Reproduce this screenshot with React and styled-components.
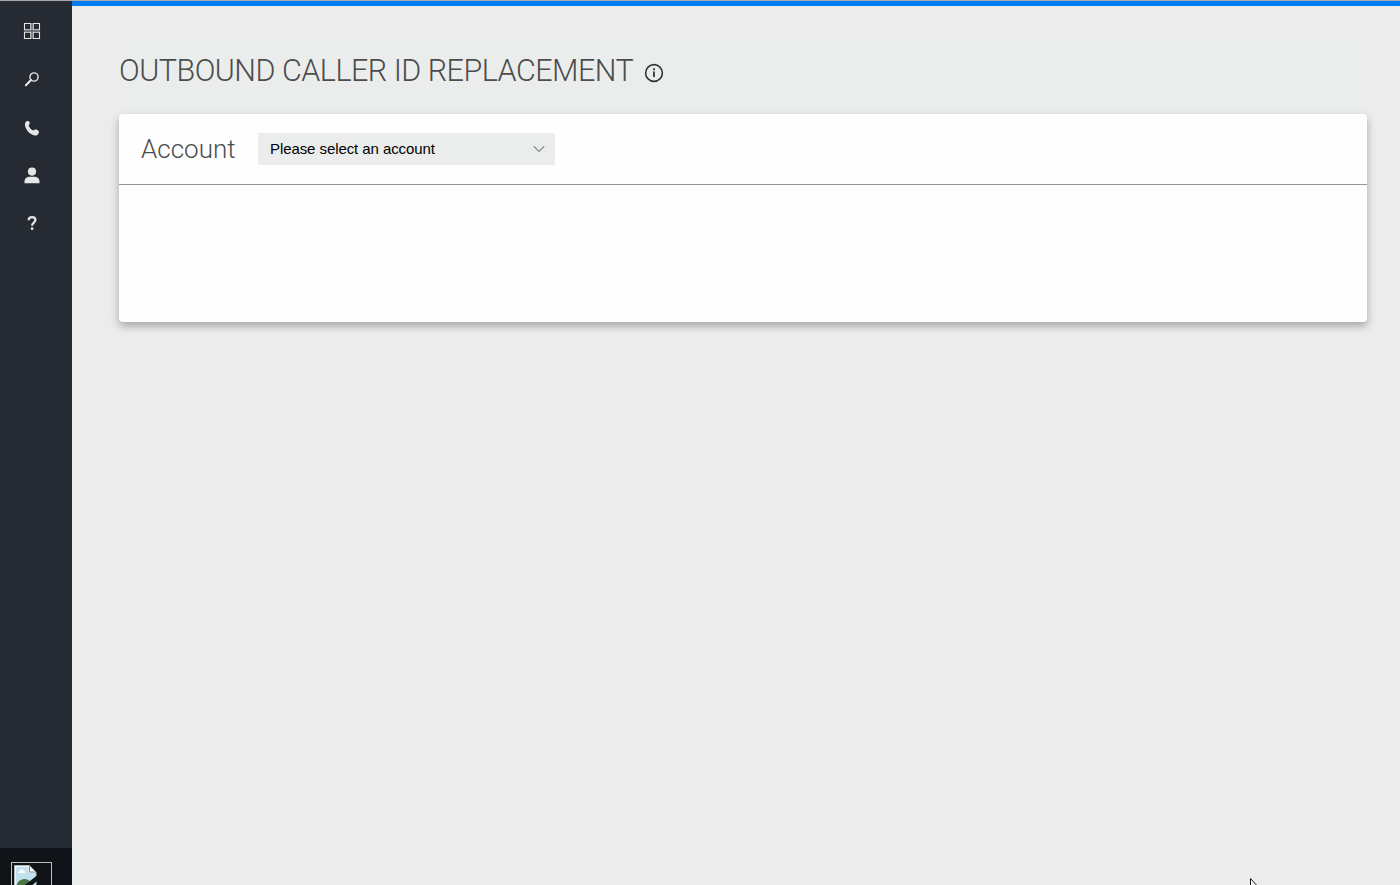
import React from "react";
import styled, { createGlobalStyle } from "styled-components";

const GlobalStyle = createGlobalStyle`
  *, *::before, *::after { box-sizing: border-box; }
  html, body { margin: 0; padding: 0; height: 100%; overflow: hidden; background: #ececec; }
`;

const Shell = styled.div`
  display: flex;
  height: 885px;
  border-top: 1px solid #a7a9aa;
  overflow: hidden;
  font-family: Roboto, sans-serif;
`;

const Sidebar = styled.aside`
  display: flex;
  flex-direction: column;
  flex: 0 0 72px;
  background: #252a33;
`;

const Nav = styled.nav`
  display: flex;
  flex-direction: column;
  flex: 1;
  padding-top: 6px;
`;

const NavButton = styled.button`
  display: flex;
  align-items: center;
  justify-content: center;
  width: 64px;
  height: 48px;
  padding: 0;
  border: 0;
  background: none;
  color: #e6e6e6;
`;

const Profile = styled.div`
  flex: 0 0 37px;
  padding: 14px 0 0 11px;
  background: #101418;
  overflow: hidden;
`;

const Avatar = styled.div`
  width: 41px;
  height: 41px;
  padding: 2px;
  border: 1px solid #c0c0c0;
`;

const Main = styled.main`
  flex: 1;
  border-top: 5px solid #007df0;
  padding: 0 33px 0 47px;
  background: #ececec;
`;

const PageHeader = styled.header`
  display: flex;
  align-items: center;
  height: 108px;
  padding-top: 21px;
  background: linear-gradient(#ececec 28px, #ebedec 28px);
`;

const Title = styled.h1`
  margin: 0;
  width: 516px;
  font-size: 30.5px;
  line-height: 36px;
  font-weight: 300;
  letter-spacing: -0.5px;
  white-space: nowrap;
  color: #4b4d4d;
`;

const InfoButton = styled.button`
  display: flex;
  margin: 4px 0 0 9px;
  padding: 0;
  border: 0;
  background: none;
  color: #333639;
`;

const Card = styled.section`
  height: 208px;
  border-radius: 4px;
  background: #fefefe;
  box-shadow: 0 4px 9px rgba(0, 0, 0, 0.3);
`;

const CardHeader = styled.div`
  display: flex;
  align-items: center;
  height: 71px;
  padding-left: 22px;
  border-bottom: 1px solid #949494;
`;

const Label = styled.span`
  width: 117px;
  font-size: 26px;
  line-height: 32px;
  font-weight: 300;
  color: #4b4d4d;
`;

const Select = styled.button`
  display: flex;
  align-items: center;
  justify-content: space-between;
  width: 297px;
  height: 32px;
  padding: 0 10px 0 12px;
  border: 0;
  background: #ebedec;
  color: #000;
  font: 15px "Liberation Sans", Arial, sans-serif;
  letter-spacing: -0.08px;
`;

const SelectValue = styled.span`
  padding-bottom: 2px;
`;

const Pointer = styled.svg`
  position: absolute;
  left: 1250px;
  top: 878px;
`;

const GridIcon = () => (
  <svg width="18" height="18" viewBox="0 0 18 18" fill="none" stroke="currentColor" strokeWidth="1.1">
    <path d="M9 1v16M1 9h16" opacity=".4" />
    <path d="M1.500 1.500h6.300v6.300H1.500zM10.200 1.500h6.300v6.300h-6.300zM1.500 10.200h6.300v6.300H1.500zM10.200 10.200h6.300v6.300h-6.300z" />
  </svg>
);

const SearchIcon = () => (
  <svg width="18" height="18" viewBox="0 0 18 18" fill="none" stroke="currentColor">
    <circle cx="11" cy="7" r="4.1" strokeWidth="1.4" />
    <path d="M8 10.100L2.900 15.200" strokeWidth="2.1" strokeLinecap="round" />
  </svg>
);

const PhoneIcon = () => (
  <svg width="18" height="18" viewBox="0 -1.300 18 18" fill="currentColor">
    <path d="M2.5 2.900C3.300 1.700 4.800 1.200 5.800 2c1 .9 1.400 2.400.5 3.300l-.7.8c.6 2 2.500 4.200 4.700 5.100l.9-.6c1.300-.8 3-.5 4 .5.9.9 1 2.400.1 3.500-1 1.400-2.800 2-4.700 1.400C6.500 14.600 2.700 10.700 2 6c-.2-1.200 0-2.300.5-3.100z" />
  </svg>
);

const UserIcon = () => (
  <svg width="18" height="18" viewBox="0 -.300 18 18" fill="currentColor">
    <circle cx="9" cy="5.300" r="4.100" />
    <path d="M1.500 17v-1.700c0-3.300 2.500-4.800 5-4.800h5c2.500 0 5 1.500 5 4.800V17z" />
  </svg>
);

const HelpIcon = () => (
  <svg width="18" height="18" viewBox="0 0 18 18" fill="none">
    <path d="M5.700 6.200C5.700 4.300 7 3.200 9 3.200s3.400 1.100 3.400 2.900c0 2.400-3.200 2.500-3.200 5.100v.5" stroke="currentColor" strokeWidth="2.200" />
    <circle cx="9.100" cy="14.700" r="1.400" fill="currentColor" />
  </svg>
);

const InfoIcon = () => (
  <svg width="20" height="20" viewBox="0 0 20 20" fill="none" stroke="currentColor">
    <circle cx="10" cy="10" r="8.400" strokeWidth="1.600" />
    <path d="M10 8.600v5.400M10 5.300v1.900" strokeWidth="1.800" />
  </svg>
);

const ChevronIcon = () => (
  <svg width="12" height="8" viewBox="0 0 12 8" fill="none" stroke="#898d8b" strokeWidth="1.300">
    <path d="M.8 1.200L6 6.400l5.200-5.200" />
  </svg>
);

const MissingImageIcon = () => (
  <svg width="24" height="24" viewBox="0 0 24 24">
    <path d="M.5.500h15L22 7v16H.500z" fill="#f5f7f7" stroke="#adb5b7" />
    <path d="M2 2h12.500v5.500H21V22H2z" fill="#c2e2ef" />
    <path d="M4 8c0-2 2-2 2.500-3 1.500-1.500 3-.5 3 1 2 0 2.500 2 1.500 2z" fill="#fff" />
    <path d="M2 22c1-5 4-8 9-8 4 0 7 4 8 8z" fill="#4c7443" />
    <path d="M15.500.500V7H22z" fill="#fff" stroke="#888e91" />
    <path d="M23 10.500L11 20v4h3l9-8z" fill="#101418" />
  </svg>
);

const navItems = [
  { label: "Dashboard", Icon: GridIcon },
  { label: "Search", Icon: SearchIcon },
  { label: "Calls", Icon: PhoneIcon },
  { label: "Users", Icon: UserIcon },
  { label: "Help", Icon: HelpIcon },
];

export default function App() {
  return (
    <>
      <GlobalStyle />
      <Shell>
        <Sidebar>
          <Nav>
            {navItems.map(({ label, Icon }) => (
              <NavButton key={label} aria-label={label}><Icon /></NavButton>
            ))}
          </Nav>
          <Profile><Avatar><MissingImageIcon /></Avatar></Profile>
        </Sidebar>
        <Main>
          <PageHeader>
            <Title>OUTBOUND CALLER ID REPLACEMENT</Title>
            <InfoButton aria-label="Information"><InfoIcon /></InfoButton>
          </PageHeader>
          <Card>
            <CardHeader>
              <Label>Account</Label>
              <Select><SelectValue>Please select an account</SelectValue><ChevronIcon /></Select>
            </CardHeader>
          </Card>
        </Main>
      </Shell>
      <Pointer width="12" height="18" viewBox="0 0 12 18">
        <path d="M.5.500v15l3.500-3 2 4.500 2-1-2-4H11z" fill="#f5f5f5" stroke="#15171c" />
      </Pointer>
    </>
  );
}
